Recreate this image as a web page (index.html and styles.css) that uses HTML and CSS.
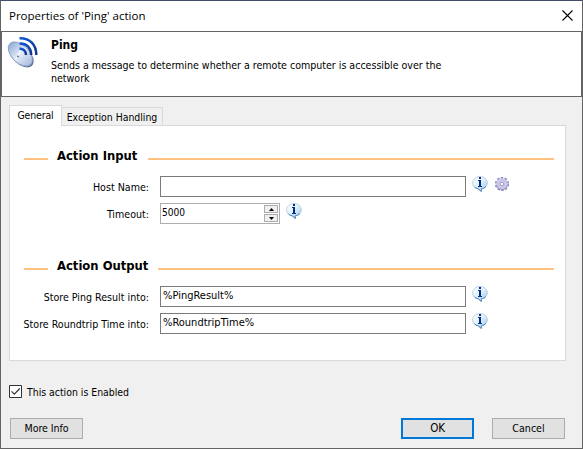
FILE: index.html
```
<!DOCTYPE html>
<html lang="en">
<head>
<meta charset="utf-8">
<title>Properties of 'Ping' action</title>
<link rel="stylesheet" href="styles.css">
</head>
<body>
<svg width="0" height="0" class="defs" aria-hidden="true">
  <defs>
    <linearGradient id="bubble" x1="0" y1="0" x2="1" y2="1">
      <stop offset="0" stop-color="#ffffff"/><stop offset=".45" stop-color="#e0f3fd"/><stop offset="1" stop-color="#8fc3ee"/>
    </linearGradient>
    <linearGradient id="dish" x1="0" y1="0" x2="1" y2="0">
      <stop offset="0" stop-color="#93acd3"/><stop offset=".5" stop-color="#e3ecf8"/><stop offset="1" stop-color="#a9bddd"/>
    </linearGradient>
    <linearGradient id="wave" x1="0" y1="0" x2="1" y2="1">
      <stop offset="0" stop-color="#0d5ad8"/><stop offset="1" stop-color="#12348c"/>
    </linearGradient>
    <symbol id="info" viewBox="0 0 16 16">
      <path d="M8 .5C3.800.5.6 3.300.6 6.900c0 3.100 2.200 5.200 5.200 5.900l3.700 2.900.2-2.900c3.300-.6 5.700-2.900 5.700-5.900C15.400 3.300 12.200.5 8 .5z" fill="url(#bubble)" stroke="#b4c6da" stroke-width=".8"/>
      <path d="M2.200 10.600c1 1.300 2.300 1.800 3.900 2.100l3.200 2.700.1-2.700c2-.3 3.500-1 4.600-2.300" fill="none" stroke="#5286bb" stroke-width="1"/>
      <path d="M7 1h2v2H7zM6 4h3v6h1v1H6v-1h1V5H6z" fill="#0b2c86"/>
    </symbol>
    <symbol id="gear" viewBox="0 0 16 16">
      <circle cx="8" cy="8" r="6.100" fill="none" stroke="#8d8abf" stroke-width="2" stroke-dasharray="2.400 1.433"/>
      <circle cx="8" cy="8" r="4" fill="#d8d7f0" stroke="#c9c7e8" stroke-width="3.600"/>
      <path d="M2.600 9.500a5.600 5.600 0 0 0 10.700.2" fill="none" stroke="#9895c8" stroke-width="1"/>
      <circle cx="8" cy="8" r="1.700" fill="#fff" stroke="#8885b8" stroke-width=".8"/>
    </symbol>
  </defs>
</svg>

<main class="window">
  <header class="titlebar">
    <h1>Properties of 'Ping' action</h1>
    <svg class="close" viewBox="0 0 11 11"><path d="M.5.500l10 10M10.500.500l-10 10" stroke="#000" stroke-width="1.100"/></svg>
  </header>

  <section class="banner">
    <svg class="dish" viewBox="0 0 32 32">
      <ellipse cx="14.200" cy="19" rx="15.200" ry="9" transform="rotate(45 14.200 19)" fill="#5f749d"/>
      <ellipse cx="13.300" cy="18" rx="14.800" ry="8.700" transform="rotate(45 13.300 18)" fill="url(#dish)" stroke="#8298be" stroke-width=".7"/>
      <path d="M9.500 22.500l4-8" stroke="#f8fbff" stroke-width="1.400"/>
      <circle cx="11" cy="20.500" r="1" fill="#4c79bd"/>
      <g fill="none" stroke="url(#wave)" stroke-width="2.500">
        <path d="M12.500 12.800c4-.2 6.500 2.200 6.500 6.200"/>
        <path d="M12.500 7.500c7.500-.3 11.700 4.500 11.700 11.500"/>
        <path d="M12.500 2.200c10.500-.3 16.800 6.500 16.800 16.800"/>
      </g>
    </svg>
    <div class="banner-text">
      <h2>Ping</h2>
      <p>Sends a message to determine whether a remote computer is accessible over the<br>network</p>
    </div>
  </section>

  <div class="tabs">
    <nav class="tablist">
      <span class="tab active">General</span>
      <span class="tab">Exception Handling</span>
    </nav>
    <section class="panel">
      <fieldset class="group">
        <h3><span>Action Input</span></h3>
        <div class="row">
          <label>Host Name:</label>
          <div class="field"></div>
          <svg class="icon"><use href="#info"/></svg>
          <svg class="icon"><use href="#gear"/></svg>
        </div>
        <div class="row">
          <label>Timeout:</label>
          <div class="field spinner">
            <span>5000</span>
            <div class="arrows">
              <i><svg viewBox="0 0 5 3"><path d="M0 3h5L2.500 0z"/></svg></i>
              <i><svg viewBox="0 0 5 3"><path d="M0 0h5L2.500 3z"/></svg></i>
            </div>
          </div>
          <svg class="icon"><use href="#info"/></svg>
        </div>
      </fieldset>
      <fieldset class="group">
        <h3><span class="wide">Action Output</span></h3>
        <div class="row">
          <label>Store Ping Result into:</label>
          <div class="field value">%PingResult%</div>
          <svg class="icon"><use href="#info"/></svg>
        </div>
        <div class="row">
          <label>Store Roundtrip Time into:</label>
          <div class="field value">%RoundtripTime%</div>
          <svg class="icon"><use href="#info"/></svg>
        </div>
      </fieldset>
    </section>
  </div>

  <div class="enabled">
    <svg viewBox="0 0 13 13"><path d="M.5.500h12v12H.5z" fill="#fff" stroke="#333"/><path d="M2.500 6.300l2.800 2.900 5.500-5.700" fill="none" stroke="#333" stroke-width="1.200"/></svg>
    <span>This action is Enabled</span>
  </div>

  <footer class="buttons">
    <button class="more">More Info</button>
    <button class="ok">OK</button>
    <button class="cancel">Cancel</button>
  </footer>
</main>
</body>
</html>
```
FILE: styles.css
```
* { box-sizing: border-box; }
body { margin: 0; font: 10.6px "DejaVu Sans Condensed", "DejaVu Sans", sans-serif; color: #000; }
.defs { position: absolute; }
h1, h2, h3, p, fieldset { margin: 0; padding: 0; border: 0; min-width: 0; }
svg { display: block; flex: none; }

.window {
  width: 583px; height: 449px;
  display: flex; flex-direction: column;
  background: #f0f0f0;
  border: 1px solid #646464; border-top-color: #444d6c;
}
.titlebar {
  height: 30px; flex: none;
  display: flex; align-items: center; justify-content: space-between;
  padding: 0 9px 0 8px;
  background: #fff;
}
h1 { font: 11.5px/18px "Open Sans", sans-serif; }
.close { width: 11px; height: 11px; margin-top: -2px; }

.banner {
  height: 66px; flex: none;
  display: flex;
  border: 1px solid #646464;
  background: #fff;
}
.dish { width: 32px; height: 32px; margin: 4px 0 0 5px; overflow: visible; }
.banner-text { margin-left: 12px; padding-top: 5px; }
h2 { font-size: 12px; line-height: 17px; }
.banner-text p { margin-top: 5px; line-height: 13px; white-space: nowrap; letter-spacing: -.02px; }

.tabs { margin: 8px 0 0 8px; width: 557px; }
.tablist { display: flex; align-items: flex-end; height: 20px; }
.tab {
  height: 18px; width: 101px;
  border: 1px solid #d9d9d9; border-left: 0; border-bottom: 0;
  font-size: 10.4px; line-height: 19px; text-align: center;
}
.tab.active {
  height: 21px; width: 53px; margin-bottom: -1px;
  border-left: 1px solid #d9d9d9;
  position: relative; z-index: 1;
  background: #fff; line-height: 18px; letter-spacing: -.1px;
}
.panel {
  height: 236px; padding: 21px 11px 0 14px;
  border: 1px solid #d9d9d9;
  background: #fff;
}
.group { height: 110px; }
h3 {
  display: flex; align-items: center;
  height: 18px; margin-bottom: 11px;
  font-size: 12.9px; line-height: 18px;
}
h3::before, h3::after { content: ""; height: 2px; background: #ffc080; margin-top: 5px; }
h3::before { width: 24px; }
h3::after { flex: 1; }
h3 span { width: 100px; padding-left: 9px; white-space: nowrap; }
h3 span.wide { width: 110px; }

.row { display: flex; height: 21px; margin-bottom: 6px; }
label { width: 136px; margin: 1px 0 0 -11px; text-align: right; line-height: 21px; white-space: nowrap; }
.field {
  width: 306px; height: 21px; margin: 0 6px 0 11px;
  padding-left: 2px;
  border: 1px solid #7a7a7a;
  line-height: 18px;
}
.value { font-size: 11px; }
.spinner { width: 120px; padding-left: 1px; display: flex; justify-content: space-between; border-color: #abadb3; font-size: 10.1px; line-height: 17px; }
.arrows { width: 14px; margin: 1px 1px 1px 0; display: flex; flex-direction: column; gap: 1px; }
.arrows i { height: 8px; display: flex; align-items: center; justify-content: center; background: #f0f0f0; border: 1px solid #acacac; }
.arrows svg { width: 5px; height: 3px; }
.icon { width: 16px; height: 16px; }
.icon + .icon { margin-left: 6px; }

.enabled { display: flex; align-items: center; gap: 5px; height: 15px; margin: 23px 0 0 8px; font-size: 10.4px; }
.enabled svg { width: 13px; height: 13px; }

.buttons { display: flex; margin: 19px 0 0 9px; }
button {
  width: 73px; height: 21px; padding: 0;
  border: 1px solid #adadad; background: #e1e1e1;
  font: 10.6px/19px "DejaVu Sans Condensed", sans-serif; color: #000;
}
.more { letter-spacing: -.1px; }
.ok { margin-left: 318px; border: 2px solid #0078d7; font-size: 11.5px; line-height: 17px; letter-spacing: -.2px; }
.cancel { margin-left: 18px; }
```
